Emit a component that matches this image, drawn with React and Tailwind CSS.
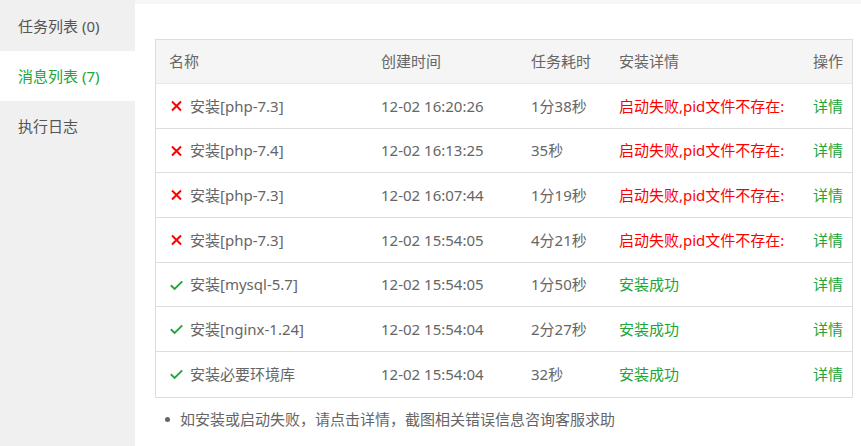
const ROWS = [
  { ok: false, name: '安装[php-7.3]', time: '12-02 16:20:26', cost: '1分38秒' },
  { ok: false, name: '安装[php-7.4]', time: '12-02 16:13:25', cost: '35秒' },
  { ok: false, name: '安装[php-7.3]', time: '12-02 16:07:44', cost: '1分19秒' },
  { ok: false, name: '安装[php-7.3]', time: '12-02 15:54:05', cost: '4分21秒' },
  { ok: true, name: '安装[mysql-5.7]', time: '12-02 15:54:05', cost: '1分50秒' },
  { ok: true, name: '安装[nginx-1.24]', time: '12-02 15:54:04', cost: '2分27秒' },
  { ok: true, name: '安装必要环境库', time: '12-02 15:54:04', cost: '32秒' },
]

const cols = 'grid grid-cols-[212px_150px_88px_193px_1fr] items-center'

function FailIcon() {
  return (
    <svg width="13" height="12" viewBox="0 0 13 12" className="flex-shrink-0">
      <path d="M2 1.5L11 10.5M11 1.5L2 10.5" stroke="#f00" strokeWidth="2" />
    </svg>
  )
}

function OkIcon() {
  return (
    <svg width="13" height="12" viewBox="0 0 13 12" className="flex-shrink-0">
      <path d="M0.8 6.3L4.6 10L12.3 2.4" fill="none" stroke="#20a53a" strokeWidth="1.9" />
    </svg>
  )
}

export default function App() {
  return (
    <div
      className="flex w-[861px] h-[446px] overflow-hidden bg-white text-[15px] text-[#666]"
      style={{ fontFamily: '"Noto Sans", "Noto Sans CJK SC", sans-serif' }}
    >
      {/* sidebar */}
      <div className="w-[135px] flex-shrink-0 bg-[#f0f0f0] pt-px">
        <div className="h-[50px] flex items-center pl-[18px] text-[#555]">任务列表 (0)</div>
        <div className="h-[50px] flex items-center pl-[18px] bg-white text-[#20a53a]">消息列表 (7)</div>
        <div className="h-[50px] flex items-center pl-[18px] text-[#555]">执行日志</div>
      </div>

      {/* main */}
      <div className="flex-1 border-t-4 border-[#f6f6f6] pt-[35px] pl-[20px] pr-[8px]">
        <div className="border border-[#ddd]">
          <div className={cols + ' h-[44px] bg-[#f5f5f5] border-b border-[#e5e9ef]'}>
            <div className="pl-[13px]">名称</div>
            <div className="pl-[13px]">创建时间</div>
            <div className="pl-[13px]">任务耗时</div>
            <div className="pl-[13px]">安装详情</div>
            <div className="text-right pr-[9px]">操作</div>
          </div>
          {ROWS.map((r, i) => (
            <div
              key={i}
              className={cols + ' h-[44.7px] ' + (i < ROWS.length - 1 ? 'border-b border-[#ddd]' : '')}
            >
              <div className="pl-[14px] flex items-center gap-[7px]">
                {r.ok ? <OkIcon /> : <FailIcon />}
                <span>{r.name}</span>
              </div>
              <div className="pl-[13px]">{r.time}</div>
              <div className="pl-[13px]">{r.cost}</div>
              <div className={'pl-[13px] whitespace-nowrap ' + (r.ok ? 'text-[#20a53a]' : 'text-[#f00]')}>
                {r.ok ? '安装成功' : '启动失败,pid文件不存在:'}
              </div>
              <div className="text-right pr-[9px] text-[#20a53a]">详情</div>
            </div>
          ))}
        </div>
        <ul className="mt-[10px] pl-[10px]">
          <li className="flex items-center gap-[10px]">
            <span className="w-[5px] h-[5px] rounded-full bg-[#666]" />
            <span>如安装或启动失败，请点击详情，截图相关错误信息咨询客服求助</span>
          </li>
        </ul>
      </div>
    </div>
  )
}
